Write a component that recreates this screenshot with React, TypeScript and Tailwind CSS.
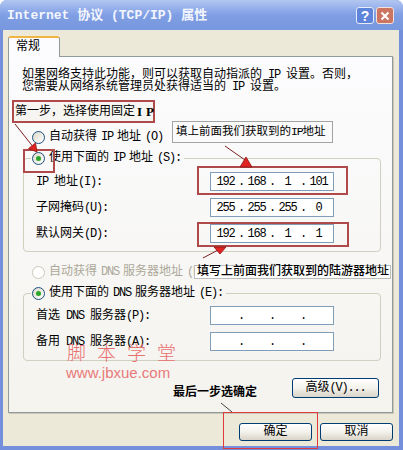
import React from 'react';

// ascii runs get squeezed so they take half the width of a CJK glyph, like SimSun
const Mix = ({ s }: { s: string }) => (
  <>
    {s.split(/([\x20-\x7e]+)/).map((p, i) =>
      i % 2 === 1 ? (
        <span key={i} className="tracking-[-1.2px]">
          {p}
        </span>
      ) : (
        <React.Fragment key={i}>{p}</React.Fragment>
      )
    )}
  </>
);

const Radio = ({ checked = false, disabled = false }: { checked?: boolean; disabled?: boolean }) => (
  <span
    className={`flex h-[13px] w-[13px] shrink-0 items-center justify-center rounded-full border ${
      disabled ? 'border-[#cac8bb] bg-white' : 'border-[#1c5180] bg-linear-to-br from-[#dcd9c8] to-white'
    }`}
  >
    {checked && <span className="h-[5px] w-[5px] rounded-full bg-[#2aa52a]" />}
  </span>
);

const IpField = ({ parts }: { parts?: string[] }) => (
  <div className="flex h-[19px] w-[124px] shrink-0 items-center border border-[#7f9db9] bg-white px-[2px] leading-none">
    {[0, 1, 2, 3].map((i) => (
      <React.Fragment key={i}>
        {i > 0 && <span className="w-[6px] text-center">.</span>}
        <span className="w-[25px] text-center tracking-[-1.2px]">{parts ? parts[i] : ''}</span>
      </React.Fragment>
    ))}
  </div>
);

const Row = ({ label, parts }: { label: string; parts?: string[] }) => (
  <div className="flex h-[19px] items-center">
    <span className="w-[174px] shrink-0">
      <Mix s={label} />
    </span>
    <IpField parts={parts} />
  </div>
);

const XpButton = ({ children, className }: { children: React.ReactNode; className: string }) => (
  <div
    className={`flex items-center justify-center rounded-[3px] border border-[#003c74] bg-linear-to-b from-white via-[#f3f2ec] to-[#d9d4c8] ${className}`}
  >
    {children}
  </div>
);

export default function App() {
  return (
    <div className="relative h-[450px] w-[403px] overflow-hidden bg-white font-['Liberation_Mono','Noto_Sans_CJK_SC',monospace] text-[12px] leading-[12px] text-black">
      <div className="flex h-full flex-col rounded-t-[7px] bg-[#7490dc]">
        {/* title bar */}
        <div className="flex h-[30px] shrink-0 items-center rounded-t-[7px] bg-linear-to-b from-[#b2c6f1] via-[#7f9ee4] to-[#7797de] pl-[7px] pr-[9px] pt-[1px]">
          <span className="text-[13px] leading-[13px] font-bold text-[#f3f6fd]">Internet 协议 (TCP/IP) 属性</span>
          <div className="ml-auto flex gap-[2px]">
            <span className="flex h-[17px] w-[18px] items-center justify-center rounded-[3px] border border-[#e6ecfa] bg-[#5e85d9] font-['Liberation_Sans'] text-[14px] font-bold text-white">
              ?
            </span>
            <span className="flex h-[17px] w-[18px] items-center justify-center rounded-[3px] border border-[#f1e2de] bg-[#cc7562]">
              <svg width="10" height="10" viewBox="0 0 10 10">
                <path d="M1.5 1.5L8.5 8.5M8.5 1.5L1.5 8.5" stroke="white" strokeWidth="2" />
              </svg>
            </span>
          </div>
        </div>

        {/* body */}
        <div className="mb-[4px] ml-[3px] mr-[4px] flex-1 bg-[#ece9d8] pl-[5px] pt-[6px]">
          <div className="relative z-10 -mb-px flex h-[21px] w-[52px] items-center rounded-t-[3px] border border-b-0 border-t-2 border-[#919b9c] border-t-[#f2b544] bg-[#fcfcfe] pb-[2px] pl-[7px]">
            常规
          </div>
          <div className="h-[357px] w-[385px] border border-[#919b9c] bg-linear-to-b from-[#fcfcfe] to-[#f4f3ee] shadow-[1px_1px_0_#c9c7ba]">
            <p className="ml-[13px] mt-[12px] leading-[12px]">
              <Mix s="如果网络支持此功能，则可以获取自动指派的 IP 设置。否则，" />
              <br />
              <Mix s="您需要从网络系统管理员处获得适当的 IP 设置。" />
            </p>

            <div className="ml-[23px] mt-[36px] flex h-[16px] items-center gap-[4px]">
              <Radio />
              <Mix s="自动获得 IP 地址(O)" />
            </div>

            <fieldset className="ml-[14px] mt-[5px] w-[358px] rounded-[4px] border border-[#d0d0bf]">
              <legend className="ml-[7px] px-[1px]">
                <span className="flex h-[16px] items-center gap-[4px] pr-[2px]">
                  <Radio checked />
                  <Mix s="使用下面的 IP 地址(S):" />
                </span>
              </legend>
              <div className="flex flex-col gap-[7px] pb-[8px] pl-[12px] pt-[6px]">
                <Row label="IP 地址(I):" parts={['192', '168', '1', '101']} />
                <Row label="子网掩码(U):" parts={['255', '255', '255', '0']} />
                <Row label="默认网关(D):" parts={['192', '168', '1', '1']} />
              </div>
            </fieldset>

            <div className="ml-[23px] mt-[12px] flex h-[16px] items-center gap-[4px] text-[#aca899]">
              <Radio disabled />
              <Mix s="自动获得 DNS 服务器地址(B)" />
            </div>

            <fieldset className="ml-[14px] mt-[5px] w-[358px] rounded-[4px] border border-[#d0d0bf]">
              <legend className="ml-[7px] px-[1px]">
                <span className="flex h-[16px] items-center gap-[4px] pr-[2px]">
                  <Radio checked />
                  <Mix s="使用下面的 DNS 服务器地址(E):" />
                </span>
              </legend>
              <div className="flex flex-col gap-[7px] pb-[9px] pl-[12px] pt-[5px]">
                <Row label="首选 DNS 服务器(P):" />
                <Row label="备用 DNS 服务器(A):" />
              </div>
            </fieldset>

            <div className="mr-[13px] mt-[17px] flex justify-end">
              <XpButton className="h-[20px] w-[87px]">
                <Mix s="高级(V)..." />
              </XpButton>
            </div>
          </div>

          <div className="mt-[10px] flex justify-end gap-[8px] pr-[6px]">
            <XpButton className="h-[18px] w-[73px]">确定</XpButton>
            <XpButton className="h-[18px] w-[73px]">取消</XpButton>
          </div>
        </div>
      </div>

      {/* annotations drawn over the dialog */}
      <div className="pointer-events-none absolute inset-0">
        <div className="absolute left-[12px] top-[100px] flex h-[23px] w-[143px] items-center whitespace-nowrap border-2 border-[#b04a4a] bg-[#f6f5f1] pl-[1px]">
          <span className="shrink-0">第一步，选择使用固定</span>
          <span className="ml-[2px] shrink-0 font-['Liberation_Serif'] text-[13px] font-bold">
            I<span className="ml-[4px]">P</span>
          </span>
        </div>
        <div className="absolute left-[172px] top-[121px] flex h-[22px] w-[161px] items-center whitespace-nowrap border border-[#a3a3a3] bg-[#fafafa] pl-[3px] text-[11.5px]">
          <span className="shrink-0">
            <Mix s="填上前面我们获取到的IP地址" />
          </span>
        </div>
        <div className="absolute left-[194px] top-[265px] flex h-[14px] w-[197px] items-center whitespace-nowrap border border-[#bdbdbd] bg-white pl-[2px] font-medium">
          填写上前面我们获取到的陆游器地址
        </div>

        <div className="absolute left-[23px] top-[149px] h-[24px] w-[32px] border-2 border-[#b04a4a]" />
        <div className="absolute left-[197px] top-[166px] h-[29px] w-[151px] border-2 border-[#b04a4a]" />
        <div className="absolute left-[197px] top-[222px] h-[25px] w-[152px] border-2 border-[#b04a4a]" />
        <div className="absolute left-[223px] top-[412px] h-[37px] w-[95px] border border-[#e03a3a]" />

        <div className="absolute left-[67px] top-[346px] flex gap-[11px] text-[19px] leading-[19px] font-light text-[#e86f6f]">
          <span>脚</span>
          <span>本</span>
          <span>学</span>
          <span>堂</span>
        </div>
        <div className="absolute left-[66px] top-[365px] font-['Liberation_Sans'] text-[15px] leading-[15px] text-[#e87a7a]">
          www.jbxue.com
        </div>

        <div className="absolute left-[173px] top-[387px] font-bold">最后一步选确定</div>

        <svg className="absolute inset-0" width="403" height="450" viewBox="0 0 403 450">
          <g stroke="#7a1f1f" strokeWidth="1">
            <line x1="15" y1="124" x2="34" y2="148" />
            <line x1="225" y1="146" x2="245" y2="160" />
            <line x1="203" y1="258" x2="218" y2="250" />
          </g>
          <line x1="221" y1="403" x2="232" y2="412" stroke="#444" strokeWidth="1" />
          <g fill="#e02424" stroke="#8e1414" strokeWidth="0.8">
            <polygon points="37,152 28.5,148.6 35.5,143" />
            <polygon points="240,167 252,167 246,157" />
            <polygon points="214,247 226,247 220,254" />
          </g>
        </svg>
      </div>
    </div>
  );
}
